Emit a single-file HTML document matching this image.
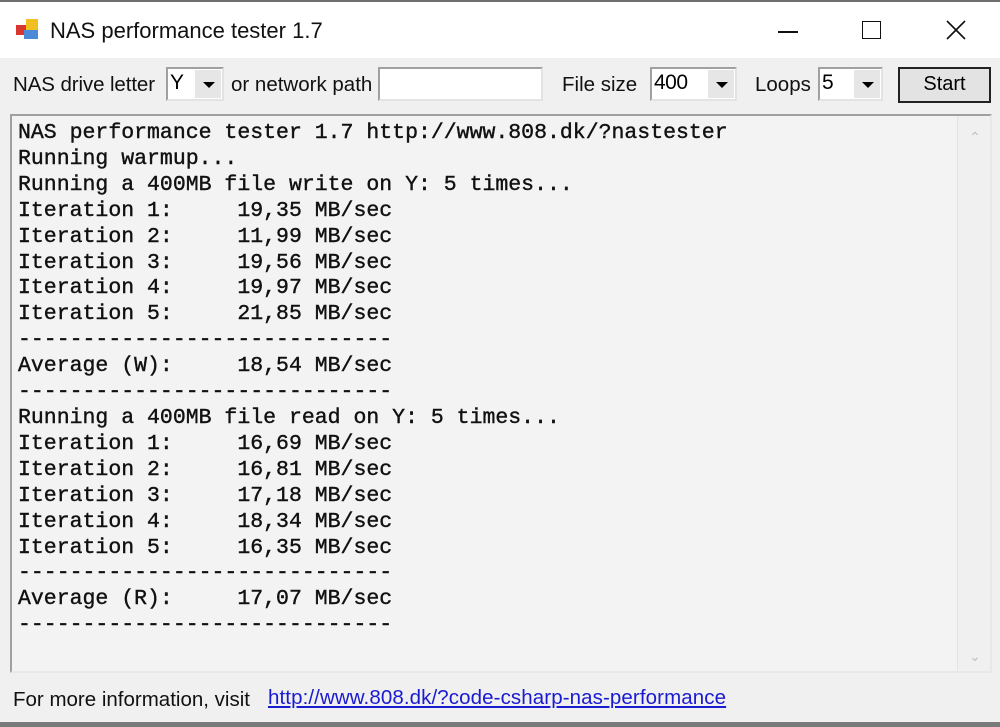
<!DOCTYPE html>
<html><head><style>
*{margin:0;padding:0;box-sizing:border-box}
body{width:1000px;height:727px;background:#f0f0f0;position:relative;overflow:hidden;font-family:"Liberation Sans",sans-serif}
.top{position:absolute;left:0;top:0;width:1000px;height:2px;background:#6e6e6e}
.title{position:absolute;left:0;top:2px;width:1000px;height:56px;background:#fff}
.abs{position:absolute}
.lbl{position:absolute;font-size:20.5px;color:#111;letter-spacing:0px;white-space:nowrap}
.combo{position:absolute;height:34px;background:#fff;border:2px solid #a0a0a0;border-right-color:#e3e3e3;border-bottom-color:#e3e3e3;font-size:21px;letter-spacing:-0.5px;padding-left:2px;line-height:28px}
.arr{position:absolute;right:1px;top:1px;width:27px;height:28px;background:#e6e6e6;border-left:1px solid #fff}
.arr:after{content:"";position:absolute;left:8px;top:12px;border-left:6px solid transparent;border-right:6px solid transparent;border-top:6px solid #000}
.out{position:absolute;left:10px;top:114px;width:982px;height:559px;background:#f3f3f3;border:2px solid #a0a0a0;border-right-color:#e8e8e8;border-bottom-color:#e8e8e8}
pre{position:absolute;left:6px;top:5px;font-family:"Liberation Mono",monospace;font-size:21.5px;line-height:25.9px;color:#111;-webkit-text-stroke:0.4px #111}
.sb{position:absolute;right:0;top:0;width:33px;height:100%;background:#f0f0f0;border-left:1px solid #e4e4e4}
</style></head><body>
<div class="top"></div>
<div class="title">
<svg class="abs" style="left:16px;top:15px" width="26" height="26"><rect x="0" y="8" width="10" height="10" fill="#d9372e"/><rect x="10" y="2" width="12" height="11" fill="#f0c020"/><rect x="8" y="13" width="14" height="9" fill="#4a8ad8"/></svg>
<div class="abs" style="left:50px;top:16px;font-size:22px;color:#111">NAS performance tester 1.7</div>
<div class="abs" style="left:778px;top:29px;width:20px;height:1.5px;background:#111"></div>
<div class="abs" style="left:862px;top:19px;width:19px;height:18px;border:1.5px solid #111"></div>
<svg class="abs" style="left:945px;top:17px" width="22" height="22"><path d="M2 2L20 20M20 2L2 20" stroke="#111" stroke-width="1.6"/></svg>
</div>
<div class="lbl" style="left:13px;top:73px;letter-spacing:-0.1px">NAS drive letter</div>
<div class="combo" style="left:166px;top:67px;width:58px">Y<div class="arr"></div></div>
<div class="lbl" style="left:231px;top:73px">or network path</div>
<div class="combo" style="left:378px;top:67px;width:165px"></div>
<div class="lbl" style="left:562px;top:73px">File size</div>
<div class="combo" style="left:650px;top:67px;width:87px">400<div class="arr"></div></div>
<div class="lbl" style="left:755px;top:73px">Loops</div>
<div class="combo" style="left:818px;top:67px;width:65px">5<div class="arr"></div></div>
<div class="abs" style="left:898px;top:67px;width:93px;height:36px;border:2px solid #222;background:#e3e3e3;font-size:20px;text-align:center;line-height:31px">Start</div>
<div class="out"><pre>NAS performance tester 1.7 http://www.808.dk/?nastester
Running warmup...
Running a 400MB file write on Y: 5 times...
Iteration 1:     19,35 MB/sec
Iteration 2:     11,99 MB/sec
Iteration 3:     19,56 MB/sec
Iteration 4:     19,97 MB/sec
Iteration 5:     21,85 MB/sec
-----------------------------
Average (W):     18,54 MB/sec
-----------------------------
Running a 400MB file read on Y: 5 times...
Iteration 1:     16,69 MB/sec
Iteration 2:     16,81 MB/sec
Iteration 3:     17,18 MB/sec
Iteration 4:     18,34 MB/sec
Iteration 5:     16,35 MB/sec
-----------------------------
Average (R):     17,07 MB/sec
-----------------------------</pre>
<div class="sb"><div class="abs" style="left:11px;top:13px;color:#c0c0c0;font-size:14px">&#8963;</div><div class="abs" style="left:11px;bottom:6px;color:#c0c0c0;font-size:14px">&#8964;</div></div></div>
<div class="lbl" style="left:13px;top:688px">For more information, visit</div>
<div class="lbl" style="left:268px;top:686px;color:#1a1ad0;text-decoration:underline;letter-spacing:0.1px">http://www.808.dk/?code-csharp-nas-performance</div>
<div class="abs" style="left:0;top:722px;width:1000px;height:5px;background:#7a7a7a"></div>
</body></html>
